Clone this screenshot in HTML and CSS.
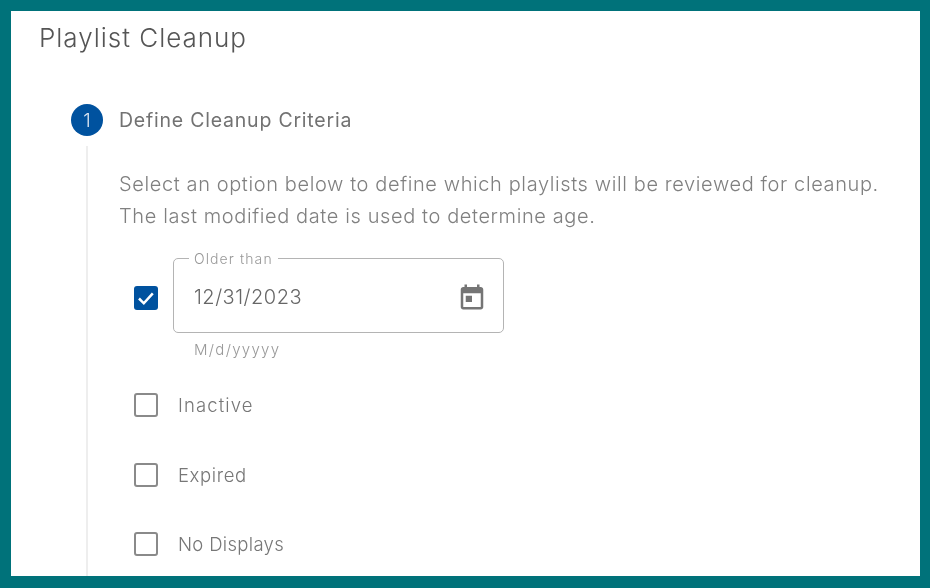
FILE: index.html
```html
<!DOCTYPE html>
<html lang="en">
<head>
<meta charset="utf-8">
<title>Playlist Cleanup</title>
<link rel="stylesheet" href="styles.css">
</head>
<body>
<main class="panel">
  <h1 class="title">Playlist Cleanup</h1>
  <div class="step-head">
    <span class="step-num">1</span>
    <span class="step-label">Define Cleanup Criteria</span>
  </div>
  <section class="step-body">
    <p class="desc">Select an option below to define which playlists will be reviewed for cleanup.<br>The last modified date is used to determine age.</p>
    <div class="date-row">
      <span class="box checked">
        <svg viewBox="0 0 24 24" width="24" height="24"><path d="M5 12.500l4.800 4.800 9-10" fill="none" stroke="#fff" stroke-width="2.500"/></svg>
      </span>
      <div class="field">
        <span class="field-label">Older than</span>
        <span class="field-value">12/31/2023</span>
        <svg class="cal" viewBox="0 0 24 24" width="30" height="30"><path fill="#757575" d="M19 4h-1V2h-2v2H8V2H6v2H5C3.900 4 3 4.900 3 6v14c0 1.100.9 2 2 2h14c1.100 0 2-.9 2-2V6c0-1.100-.9-2-2-2zm0 16H5V9h14v11zM7 11h5v5H7z"/></svg>
      </div>
    </div>
    <div class="hint">M/d/yyyyy</div>
    <label class="opt opt-first"><span class="box"></span><span class="opt-wide">Inactive</span></label>
    <label class="opt"><span class="box"></span><span>Expired</span></label>
    <label class="opt"><span class="box"></span><span class="opt-narrow">No Displays</span></label>
  </section>
</main>
</body>
</html>
```
FILE: styles.css
```css
html, body { margin: 0; height: 100%; }
body {
  width: 930px;
  height: 588px;
  box-sizing: border-box;
  padding: 11px 10px 12px 11px;
  background: #00727a;
  font-family: "Inter", "Liberation Sans", sans-serif;
  font-weight: 300;
  overflow: hidden;
}
.panel {
  height: 565px;
  background: #fff;
  overflow: hidden;
  color: #6f6f6f;
  filter: blur(0.45px);
}
.title {
  margin: 0;
  padding: 9px 0 0 28px;
  font-size: 26px;
  line-height: 36px;
  font-weight: 300;
  letter-spacing: 0.98px;
  color: #555;
}
.step-head {
  display: flex;
  align-items: center;
  gap: 16px;
  margin: 48px 0 0 60px;
}
.step-num {
  width: 32px;
  height: 32px;
  border-radius: 50%;
  background: #00529f;
  color: #dbe6f2;
  font-size: 19px;
  display: flex;
  align-items: center;
  justify-content: center;
}
.step-label {
  font-size: 19.500px;
  letter-spacing: 0.78px;
  font-weight: 400;
  color: #727272;
}
.step-body {
  margin: 10px 0 0 75px;
  border-left: 2px solid #eeeeee;
  padding: 22px 0 0 31px;
  height: 420px;
}
.desc {
  margin: 0;
  font-size: 20px;
  line-height: 32px;
  letter-spacing: 0.61px;
  color: #808080;
  white-space: nowrap;
}
.date-row {
  display: flex;
  align-items: center;
  gap: 15px;
  margin: 26px 0 0 15px;
}
.box {
  width: 24px;
  height: 24px;
  box-sizing: border-box;
  border: 2px solid #8a8a8a;
  border-radius: 3px;
  flex: none;
  display: block;
}
.box.checked {
  border: 0;
  background: #00529f;
  margin-top: 4px;
}
.box.checked svg { display: block; }
.field {
  position: relative;
  width: 331px;
  height: 75px;
  box-sizing: border-box;
  border: 1px solid #b4b4b4;
  border-radius: 5px;
  display: flex;
  align-items: center;
  padding: 2px 16px 0 20px;
}
.field-label {
  position: absolute;
  left: 15px;
  top: -8px;
  padding: 0 5px;
  background: #fff;
  font-size: 14px;
  line-height: 16px;
  letter-spacing: 1.100px;
  color: #999;
}
.field-value {
  flex: 1;
  font-size: 20px;
  line-height: 26px;
  padding-top: 1px;
  letter-spacing: 0.5px;
  color: #666;
}
.cal { flex: none; }
.hint {
  margin: 7px 0 0 75px;
  font-size: 15px;
  line-height: 20px;
  letter-spacing: 1.300px;
  color: #999;
}
.opt {
  display: flex;
  align-items: center;
  gap: 20px;
  height: 24px;
  margin: 45.500px 0 0 15px;
  font-size: 18.500px;
  letter-spacing: 0.6px;
  color: #777;
}
.opt-first { margin-top: 33px; }
.opt-wide { letter-spacing: 1.100px; }
.opt-narrow { letter-spacing: 0.32px; }
```
